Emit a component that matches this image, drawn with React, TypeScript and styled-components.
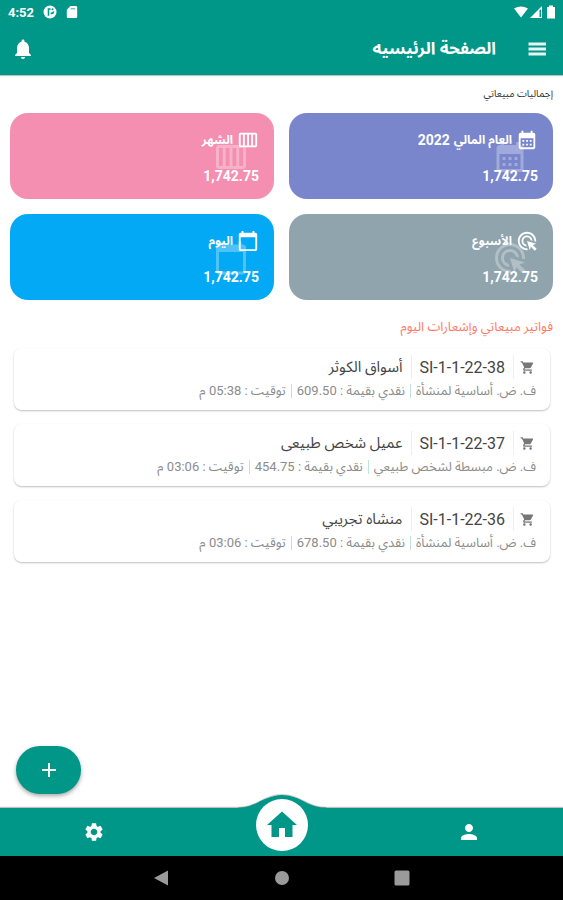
import React from "react";
import styled, { createGlobalStyle } from "styled-components";
import type { IconType } from "react-icons";
import {
  MdAdd,
  MdAdsClick,
  MdCalendarMonth,
  MdCalendarToday,
  MdCalendarViewWeek,
  MdHome,
  MdNotifications,
  MdPerson,
  MdSettings,
  MdShoppingCart,
} from "react-icons/md";

const teal = "#009688";

const GlobalStyle = createGlobalStyle`
  *, *::before, *::after { box-sizing: border-box; }
  body {
    margin: 0;
    background: #fff;
    font-family: Roboto, "Noto Sans Arabic", "DejaVu Sans", sans-serif;
  }
  button { font: inherit; color: inherit; border: 0; padding: 0; background: none; cursor: pointer; }
  h1, h2, p, ul { margin: 0; padding: 0; }
  svg { display: block; flex: none; }
`;

const Screen = styled.div`
  display: flex;
  flex-direction: column;
  min-height: 100vh;
  direction: rtl;
`;

const StatusBar = styled.div`
  direction: ltr;
  display: flex;
  justify-content: space-between;
  align-items: center;
  height: 24px;
  padding: 0 6px 0 8px;
  background: ${teal};
  color: #fff;
  font-size: 13px;
  font-weight: 700;
`;

const StatusGroup = styled.div<{ $gap: number }>`
  display: flex;
  align-items: center;
  gap: ${(p) => p.$gap}px;
`;

const AppBar = styled.header`
  display: flex;
  align-items: center;
  height: 51px;
  padding: 0 14px 2px 11px;
  background: ${teal};
  color: #fff;
  box-shadow: 0 1px 1px rgba(0, 0, 0, 0.25);
`;

const IconButton = styled.button`
  display: flex;
`;

const Title = styled.h1`
  flex: 1;
  margin-inline-start: 29px;
  padding-bottom: 2px;
  font-size: 17px;
  line-height: 24px;
  font-weight: 700;
`;

const Main = styled.main`
  flex: 1;
  display: flex;
  flex-direction: column;
  padding: 10px 10px 14px;
`;

const Caption = styled.h2`
  font-size: 10px;
  line-height: 18px;
  font-weight: 400;
  color: #333;
`;

const Totals = styled.section`
  display: grid;
  grid-template-columns: 1fr 1fr;
  gap: 15px;
  margin-top: 10px;
`;

const TotalCard = styled.article<{ $color: string }>`
  position: relative;
  display: flex;
  flex-direction: column;
  justify-content: space-between;
  height: 86px;
  padding: 15px 15px 13px;
  border-radius: 18px;
  background: ${(p) => p.$color};
  color: #fff;
  font-weight: 700;
`;

const TotalLabel = styled.div`
  display: flex;
  align-items: center;
  gap: 4px;
  font-size: 12px;
  line-height: 24px;
`;

const Year = styled.span`
  font-size: 14px;
`;

const TotalValue = styled.p`
  position: relative;
  font-size: 14px;
  line-height: 20px;
`;

const Ghost = styled.span`
  position: absolute;
  top: 26px;
  right: 25px;
  opacity: 0.3;
`;

const DayHeading = styled.h2`
  margin-top: 17px;
  font-size: 13px;
  line-height: 20px;
  font-weight: 400;
  color: #ff7a66;
`;

const Invoices = styled.ul`
  display: flex;
  flex-direction: column;
  gap: 14px;
  margin: 11px 3px 0 4px;
  list-style: none;
`;

const Invoice = styled.li`
  height: 62px;
  padding: 6px 14px 0;
  border-radius: 8px;
  background: #fff;
  box-shadow: 0 1px 2px rgba(0, 0, 0, 0.26);
`;

const InvoiceTop = styled.div`
  display: flex;
  align-items: center;
  height: 26px;
  font-size: 15px;
  color: #444;
`;

const CartCell = styled.span`
  display: flex;
  align-items: center;
  height: 24px;
  padding-inline: 1px 6px;
  border-inline-end: 1px solid #eef1f1;
  color: #777;
`;

const Code = styled.bdi`
  height: 24px;
  line-height: 26px;
  padding: 0 8px;
  border-left: 1px solid #e6f1ef;
  font-size: 16px;
`;

const Customer = styled.span`
  padding-inline-start: 8px;
`;

const Details = styled.div`
  display: flex;
  align-items: center;
  height: 22px;
  font-size: 13px;
  color: #8c8c8c;
`;

const Detail = styled.span`
  white-space: nowrap;
  line-height: 14px;

  & + & {
    margin-inline-start: 5px;
    padding-inline-start: 5px;
    border-inline-start: 1px solid #bfe3df;
  }
`;

const AddButton = styled.button`
  display: flex;
  align-items: center;
  justify-content: center;
  align-self: flex-end;
  width: 65px;
  height: 48px;
  margin: auto 0 0 6px;
  border-radius: 24px;
  background: ${teal};
  color: #fff;
  box-shadow: 0 2px 4px rgba(0, 0, 0, 0.35);
`;

const BottomBar = styled.nav`
  position: relative;
  display: grid;
  grid-template-columns: 1fr 1fr 1fr;
  grid-template-rows: 48px;
  justify-items: center;
  align-items: center;
  height: 48px;
  background: ${teal};
  color: #fff;
  box-shadow: 0 -1px 1px rgba(0, 0, 0, 0.25);
`;

const Hump = styled.svg`
  position: absolute;
  left: 50%;
  bottom: 46px;
  transform: translateX(-50%);
`;

const HomeButton = styled.button`
  position: relative;
  display: flex;
  align-items: center;
  justify-content: center;
  align-self: start;
  width: 52px;
  height: 52px;
  margin-top: -9px;
  border-radius: 50%;
  background: #fff;
  color: ${teal};
`;

const SystemBar = styled.div`
  direction: ltr;
  display: flex;
  justify-content: center;
  align-items: center;
  gap: 104px;
  height: 44px;
  background: #000;
`;

interface Total {
  label: string;
  year?: string;
  value: string;
  color: string;
  icon: IconType;
}

const totals: Total[] = [
  { label: "العام المالي", year: "2022", value: "1,742.75", color: "#7986cb", icon: MdCalendarMonth },
  { label: "الشهر", value: "1,742.75", color: "#f48fb1", icon: MdCalendarViewWeek },
  { label: "الأسبوع", value: "1,742.75", color: "#90a4ae", icon: MdAdsClick },
  { label: "اليوم", value: "1,742.75", color: "#03a9f4", icon: MdCalendarToday },
];

const invoices = [
  {
    code: "SI-1-1-22-38",
    customer: "أسواق الكوثر",
    details: ["ف. ض. أساسية لمنشأة", "نقدي بقيمة : 609.50", "توقيت : 05:38 م"],
  },
  {
    code: "SI-1-1-22-37",
    customer: "عميل شخص طبيعى",
    details: ["ف. ض. مبسطة لشخص طبيعي", "نقدي بقيمة : 454.75", "توقيت : 03:06 م"],
  },
  {
    code: "SI-1-1-22-36",
    customer: "منشاه تجريبي",
    details: ["ف. ض. أساسية لمنشأة", "نقدي بقيمة : 678.50", "توقيت : 03:06 م"],
  },
];

export default function App() {
  return (
    <Screen lang="ar">
      <GlobalStyle />
      <StatusBar>
        <StatusGroup $gap={9}>
          <span>4:52</span>
          <svg width="14" height="14" viewBox="0 0 14 14">
            <circle cx="7" cy="7" r="6.5" fill="#fff" />
            <path d="M5.500 3.200v7.600M5 4h2.600M7.600 8.400h1a1.800 1.800 0 0 0 1.800-1.800" stroke={teal} strokeWidth="1.600" fill="none" />
            <circle cx="9.500" cy="4.300" r="1" fill={teal} />
          </svg>
          <svg width="12" height="14" viewBox="0 0 12 14">
            <path d="M4.500 1H10a1.200 1.200 0 0 1 1.200 1.200v9.600A1.200 1.200 0 0 1 10 13H2a1.200 1.200 0 0 1-1.200-1.200V4.700z" fill="#fff" />
            <path d="M4.700 3.800h4.500" stroke={teal} strokeWidth="0.800" />
          </svg>
        </StatusGroup>
        <StatusGroup $gap={2}>
          <svg width="14" height="12" viewBox="0 0 14 12">
            <path d="M0 2.500Q7-1.500 14 2.500L7 11.500z" fill="#fff" />
          </svg>
          <svg width="13" height="12" viewBox="0 0 13 12">
            <path d="M0 12L12 0V12z" fill="#fff" />
            <path d="M9.500 4.500V11H11V3z" fill={teal} />
          </svg>
          <svg width="12" height="14" viewBox="0 0 12 14">
            <path d="M4 0.500h4v1.500h2v11.500H2V2h2z" fill="#fff" />
          </svg>
        </StatusGroup>
      </StatusBar>

      <AppBar>
        <IconButton aria-label="القائمة">
          <svg width="24" height="24" viewBox="0 0 24 24">
            <path d="M3.500 7h17.500M3.500 12h17.500M3.500 17h17.500" stroke="#fff" strokeOpacity="0.900" strokeWidth="2.800" />
          </svg>
        </IconButton>
        <Title>الصفحة الرئيسيه</Title>
        <IconButton aria-label="الإشعارات">
          <MdNotifications size={24} />
        </IconButton>
      </AppBar>

      <Main>
        <Caption>إجماليات مبيعاتي</Caption>
        <Totals>
          {totals.map(({ label, year, value, color, icon: Icon }) => (
            <TotalCard key={label} $color={color}>
              <Ghost>
                <Icon size={36} />
              </Ghost>
              <TotalLabel>
                <Icon size={22} />
                <span>{label}</span>
                {year && <Year>{year}</Year>}
              </TotalLabel>
              <TotalValue>{value}</TotalValue>
            </TotalCard>
          ))}
        </Totals>

        <DayHeading>فواتير مبيعاتي وإشعارات اليوم</DayHeading>
        <Invoices>
          {invoices.map((invoice) => (
            <Invoice key={invoice.code}>
              <InvoiceTop>
                <CartCell>
                  <MdShoppingCart size={15} />
                </CartCell>
                <Code>{invoice.code}</Code>
                <Customer>{invoice.customer}</Customer>
              </InvoiceTop>
              <Details>
                {invoice.details.map((text) => (
                  <Detail key={text}>{text}</Detail>
                ))}
              </Details>
            </Invoice>
          ))}
        </Invoices>

        <AddButton aria-label="إضافة">
          <MdAdd size={24} />
        </AddButton>
      </Main>

      <BottomBar>
        <Hump width="92" height="17" viewBox="0 0 92 17">
          <path d="M0 15C20 15 28 2 46 2S72 15 92 15V17H0z" fill={teal} />
          <path d="M2 14.500C21 14 28 1.500 46 1.500S71 14 90 14.500" fill="none" stroke="#000" strokeOpacity="0.200" />
        </Hump>
        <IconButton aria-label="الحساب">
          <MdPerson size={24} />
        </IconButton>
        <HomeButton aria-label="الرئيسية">
          <MdHome size={36} />
        </HomeButton>
        <IconButton aria-label="الإعدادات">
          <MdSettings size={22} />
        </IconButton>
      </BottomBar>

      <SystemBar>
        <IconButton aria-label="رجوع">
          <svg width="16" height="16" viewBox="0 0 16 16">
            <path d="M0 8L14 0.500V15.500z" fill="#9a9a9a" />
          </svg>
        </IconButton>
        <IconButton aria-label="الشاشة الرئيسية">
          <svg width="16" height="16" viewBox="0 0 16 16">
            <circle cx="8" cy="8" r="7" fill="#9a9a9a" />
          </svg>
        </IconButton>
        <IconButton aria-label="التطبيقات الأخيرة">
          <svg width="16" height="16" viewBox="0 0 16 16">
            <rect x="0.500" y="0.500" width="15" height="15" rx="1.500" fill="#9a9a9a" />
          </svg>
        </IconButton>
      </SystemBar>
    </Screen>
  );
}
